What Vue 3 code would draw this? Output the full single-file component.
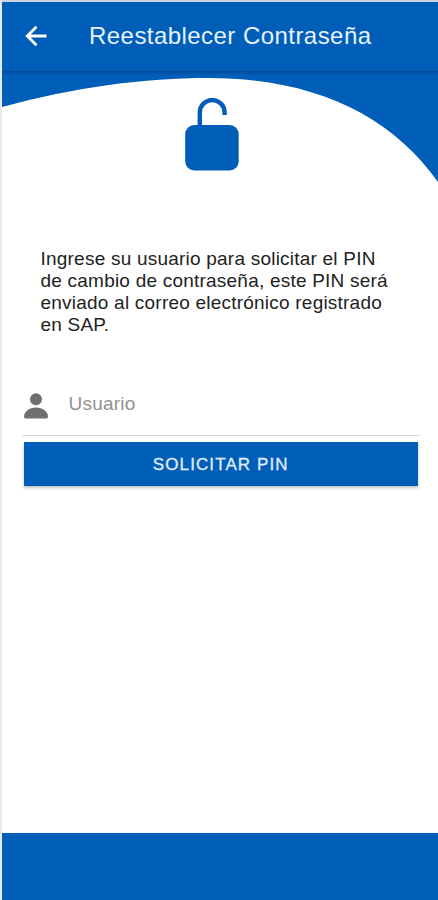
<template>
  <div class="screen">
    <header class="toolbar">
      <button class="back" type="button" aria-label="Volver" @click="back">
        <svg width="22" height="22" viewBox="0 0 22 22">
          <path d="M11.500 1.800 2.200 11l9.300 9.200M3 11h18.500" />
        </svg>
      </button>
      <h1 class="title">Reestablecer Contraseña</h1>
    </header>

    <main class="content">
      <div class="hero">
        <svg class="wave" width="436" height="120" viewBox="2 71 436 120">
          <path
            d="M2 71V107C75 87 145 78 208 78C312 78 390 114 438 182V71Z"
          />
        </svg>
        <svg class="lock" width="54" height="74" viewBox="0 0 54 74">
          <path d="M14.800 30V14.500a12.400 12.500 0 0 1 24.800 0V17" />
          <rect x="0.200" y="27" width="53.500" height="45.500" rx="9" />
        </svg>
      </div>

      <p class="message">
        Ingrese su usuario para solicitar el PIN<br />
        de cambio de contraseña, este PIN será<br />
        enviado al correo electrónico registrado<br />
        en SAP.
      </p>

      <form class="form" @submit.prevent="send">
        <label class="item">
          <svg width="24" height="26" viewBox="0 0 24 26">
            <circle cx="12" cy="6.200" r="6" />
            <path
              d="M0 23.500C0 18.500 5.500 14.500 12 14.500s12 4 12 9Q24 25.500 22.500 25.500H1.500Q0 25.500 0 23.500Z"
            />
          </svg>
          <input v-model="user" type="text" placeholder="Usuario" />
        </label>
        <button class="submit" type="submit">SOLICITAR PIN</button>
      </form>
    </main>

    <footer class="footer"></footer>
  </div>
</template>

<script setup>
import { ref } from "vue";

const user = ref("");

function back() {
  window.history.back();
}

function send() {
  console.log(user.value);
}
</script>

<style>
body {
  margin: 0;
}
</style>

<style scoped>
.screen {
  display: flex;
  flex-direction: column;
  box-sizing: border-box;
  height: 900px;
  border-top: 2px solid #ccd5e6;
  border-left: 2px solid #e9e9ec;
  background: #fff;
  font-family: "Liberation Sans", Arial, sans-serif;
  overflow: hidden;
}
.toolbar {
  display: flex;
  align-items: center;
  position: relative;
  z-index: 1;
  box-sizing: border-box;
  flex-shrink: 0;
  height: 69px;
  padding-bottom: 2px;
  background: #005eb8;
  box-shadow: 0 1px 3px rgba(0, 30, 80, 0.5);
}
.back {
  display: flex;
  margin-left: 23px;
  padding: 0;
  border: 0;
  background: none;
}
.back path {
  fill: none;
  stroke: #fff;
  stroke-width: 2.8;
}
.title {
  margin: 0 0 0 42px;
  color: #e6f2ff;
  font-size: 24px;
  font-weight: 400;
  line-height: 28px;
  letter-spacing: 0.45px;
  white-space: nowrap;
}
.content {
  flex: 1;
}
.hero {
  display: flex;
  justify-content: center;
  position: relative;
  height: 120px;
}
.wave {
  position: absolute;
  top: 0;
  left: 0;
  fill: #005eb8;
}
.lock {
  position: relative;
  margin-top: 27px;
  margin-right: 16px;
  fill: #005eb8;
}
.lock path {
  fill: none;
  stroke: #005eb8;
  stroke-width: 4.4;
}
.message {
  margin: 57px 0 0 38.5px;
  color: #222;
  font-size: 19px;
  line-height: 22px;
  letter-spacing: 0.22px;
  white-space: nowrap;
}
.form {
  margin: 36px 18px 0 20px;
}
.item {
  display: flex;
  align-items: center;
  box-sizing: border-box;
  height: 64px;
  padding-left: 2px;
  border-bottom: 1px solid #d8d8d8;
}
.item svg {
  flex-shrink: 0;
  margin-top: 4px;
  fill: #707070;
}
.item input {
  flex: 1;
  min-width: 0;
  height: 30px;
  margin-left: 20.5px;
  padding: 0;
  border: 0;
  outline: 0;
  background: none;
  color: #222;
  font-family: inherit;
  font-size: 19px;
  letter-spacing: 0.22px;
}
.item input::placeholder {
  color: #929292;
  opacity: 1;
}
.submit {
  display: block;
  width: 393.5px;
  height: 44px;
  margin: 6px 0 0 2px;
  padding: 1px 0 0;
  border: 0;
  background: #005eb8;
  box-shadow: 0 2px 3px rgba(0, 0, 0, 0.25);
  color: #e0eeff;
  font-family: inherit;
  font-size: 17px;
  letter-spacing: 1.1px;
  -webkit-text-stroke: 0.3px #e0eeff;
}
.footer {
  flex-shrink: 0;
  height: 67px;
  background: #005eb8;
}
</style>
